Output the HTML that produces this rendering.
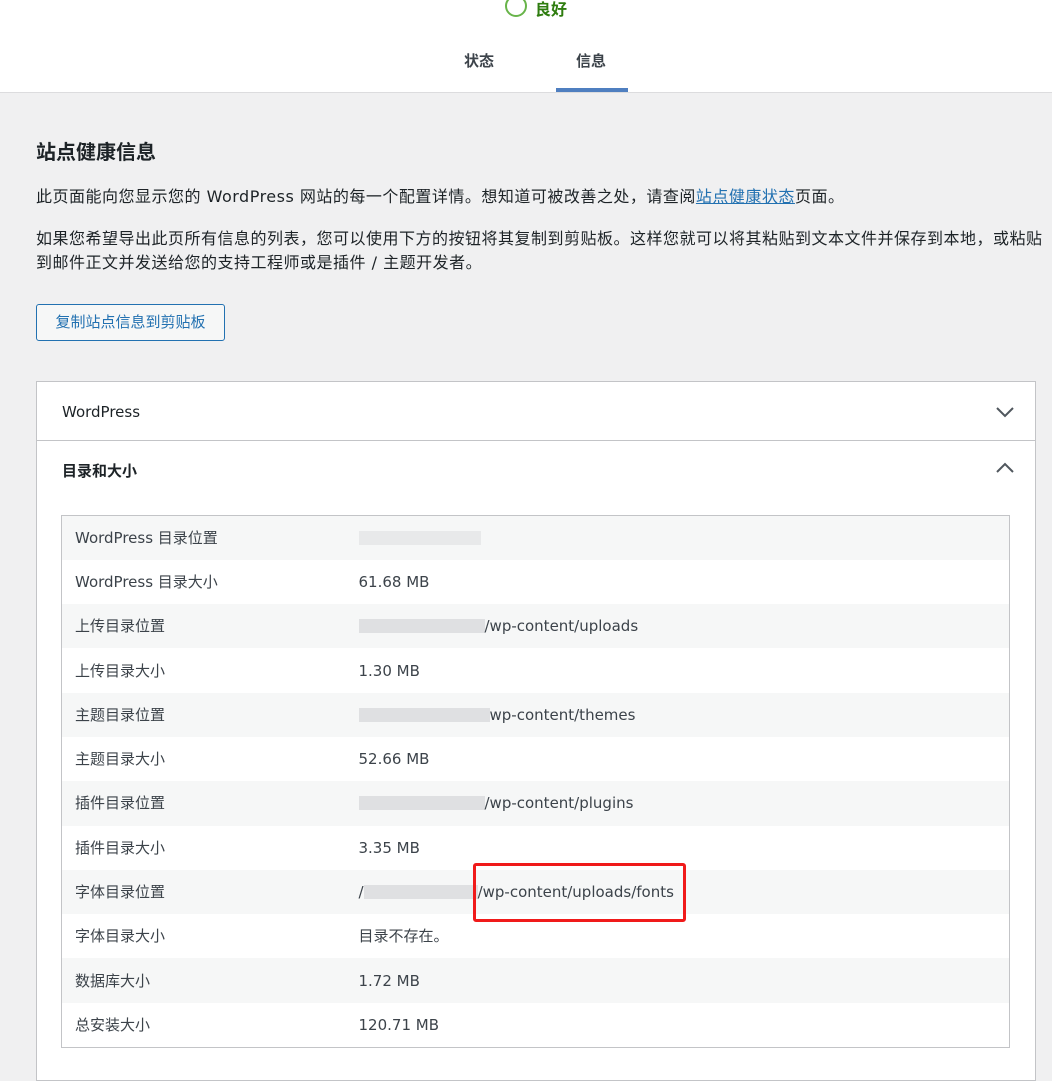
<!DOCTYPE html>
<html><head><meta charset="utf-8"><style>
*{margin:0;padding:0;box-sizing:border-box}
body{width:1052px;height:1057px;overflow:hidden;background:#f0f0f1;font-family:"DejaVu Sans","Noto Sans CJK SC",sans-serif;color:#1d2327;position:relative}
.top{position:absolute;left:0;top:0;width:1052px;height:93px;background:#fff;border-bottom:1px solid #dcdcde}
.good{position:absolute;left:505px;top:-5px;width:22px;height:22px;border:2px solid #68b44a;border-radius:50%}
.goodt{position:absolute;left:535px;top:-4px;font-size:16px;font-weight:bold;color:#2f7d10}
.tab{position:absolute;top:50px;font-size:15px;font-weight:bold;color:#3c434a}
.tabline{position:absolute;left:556px;top:88px;width:72px;height:4px;background:#4f7fc0}
h1{position:absolute;left:36px;top:136px;font-size:20px;font-weight:bold;color:#1d2327}
p{position:absolute;left:36px;font-size:16px;line-height:24px;letter-spacing:0.5px;color:#1d2327;white-space:nowrap}
a{color:#2271b1}
.btn{position:absolute;left:36px;top:304px;width:189px;height:37px;border:1px solid #2271b1;border-radius:3px;background:#f6f7f7;color:#2271b1;font-size:15px;line-height:35px;text-align:center}
.panel{position:absolute;left:36px;top:381px;width:1000px;height:700px;background:#fff;border:1px solid #c3c4c7}
.hd{position:absolute;left:25px;font-size:15px;color:#1d2327}
.sep{position:absolute;left:0;top:58px;width:998px;height:1px;background:#c3c4c7}
.chev{position:absolute;left:958px;width:20px;height:14px}
table{position:absolute;left:24px;top:133px;width:949px;border:1px solid #c3c4c7;border-collapse:collapse;font-size:15px;color:#3c434a}
td{height:44.3px;padding:0 13px;vertical-align:middle;line-height:20px}
td:first-child{width:284px}
tr:nth-child(odd){background:#f6f7f7}
.blur{display:inline-block;height:14px;background:#dfe0e2;vertical-align:-2px}
.red{position:absolute;left:473px;top:863px;width:213px;height:59px;border:3px solid #f01a1a;border-radius:3px}
</style></head><body>
<div class="top">
<div class="good"></div><div class="goodt">良好</div>
<div class="tab" style="left:464px">状态</div>
<div class="tab" style="left:576px">信息</div>
<div class="tabline"></div>
</div>
<h1>站点健康信息</h1>
<p style="top:185px">此页面能向您显示您的 WordPress 网站的每一个配置详情。想知道可被改善之处，请查阅<a href="#">站点健康状态</a>页面。</p>
<p style="top:227px">如果您希望导出此页所有信息的列表，您可以使用下方的按钮将其复制到剪贴板。这样您就可以将其粘贴到文本文件并保存到本地，或粘贴<br>到邮件正文并发送给您的支持工程师或是插件 / 主题开发者。</p>
<div class="btn">复制站点信息到剪贴板</div>
<div class="panel">
<div class="hd" style="top:21px">WordPress</div>
<svg class="chev" style="top:23px" viewBox="0 0 20 14"><path d="M2 3l8 8 8-8" fill="none" stroke="#50575e" stroke-width="2"/></svg>
<div class="sep"></div>
<div class="hd" style="top:78px;font-weight:bold">目录和大小</div>
<svg class="chev" style="top:79px" viewBox="0 0 20 14"><path d="M2 11l8-8 8 8" fill="none" stroke="#50575e" stroke-width="2"/></svg>
<table>
<tr><td>WordPress 目录位置</td><td><span class="blur" style="width:122px;background:#e8e9ea"></span></td></tr>
<tr><td>WordPress 目录大小</td><td>61.68 MB</td></tr>
<tr><td>上传目录位置</td><td><span class="blur" style="width:126px"></span>/wp-content/uploads</td></tr>
<tr><td>上传目录大小</td><td>1.30 MB</td></tr>
<tr><td>主题目录位置</td><td><span class="blur" style="width:131px"></span>wp-content/themes</td></tr>
<tr><td>主题目录大小</td><td>52.66 MB</td></tr>
<tr><td>插件目录位置</td><td><span class="blur" style="width:126px"></span>/wp-content/plugins</td></tr>
<tr><td>插件目录大小</td><td>3.35 MB</td></tr>
<tr><td>字体目录位置</td><td>/<span class="blur" style="width:114px"></span>/wp-content/uploads/fonts</td></tr>
<tr><td>字体目录大小</td><td>目录不存在。</td></tr>
<tr><td>数据库大小</td><td>1.72 MB</td></tr>
<tr><td>总安装大小</td><td>120.71 MB</td></tr>
</table>
</div>
<div class="red"></div>
</body></html>
